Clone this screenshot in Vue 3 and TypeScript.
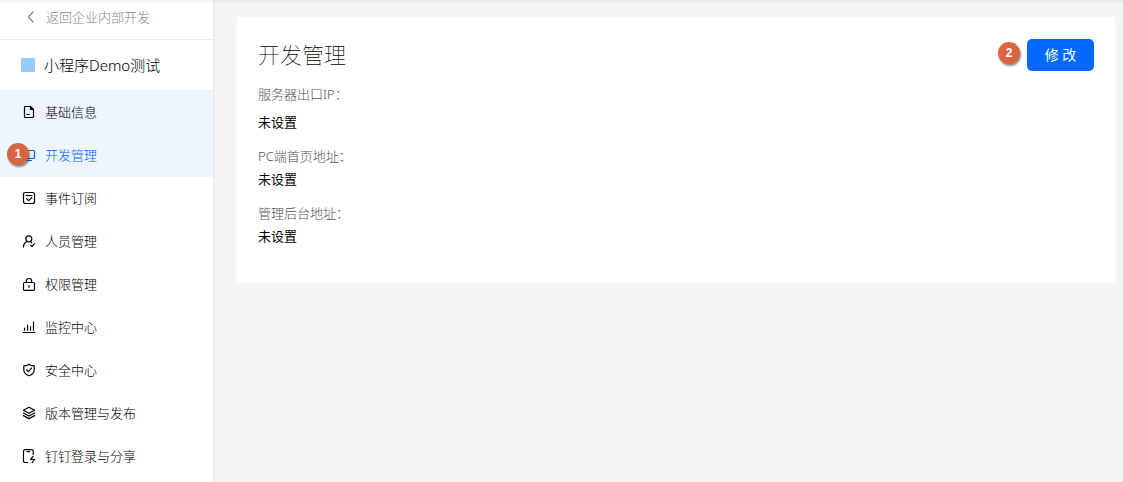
<script setup lang="ts">
interface NavItem {
  label: string
  icon: string
  highlighted?: boolean
  current?: boolean
  badge?: string
}

interface Field {
  label: string
  value: string
  roomy?: boolean
}

const navItems: NavItem[] = [
  {
    label: '基础信息',
    icon: 'M8.5 1.5H3.5Q2.5 1.5 2.5 2.5V11.5Q2.5 12.5 3.5 12.5H10.5Q11.5 12.5 11.5 11.5V4.5L8.5 1.5V4.5H11.5M4.8 9.5H7.2',
    highlighted: true,
  },
  {
    label: '开发管理',
    icon: 'M2.5 2.5H11.5Q12.5 2.5 12.5 3.5V9.5Q12.5 10.5 11.5 10.5H2.5Q1.5 10.5 1.5 9.5V3.5Q1.5 2.5 2.5 2.5ZM4.5 12.5H9.5',
    highlighted: true,
    current: true,
    badge: '1',
  },
  {
    label: '事件订阅',
    icon: 'M3.5 1.5H10.5Q12.5 1.5 12.5 3.5V10.5Q12.5 12.5 10.5 12.5H3.5Q1.5 12.5 1.5 10.5V3.5Q1.5 1.5 3.5 1.5ZM4 4.5H10M4.6 7.6L6.6 9.6L9.8 6.6',
  },
  {
    label: '人员管理',
    icon: 'M6.8 1.8A3 3 0 1 1 6.8 7.8A3 3 0 1 1 6.8 1.8ZM4.8 7.6Q1.6 9 1.4 13M8.6 7.4L9.8 9M8.6 11.2L10 12.6L12.6 9.6',
  },
  {
    label: '权限管理',
    icon: 'M2.5 5.5H11.5Q12.5 5.5 12.5 6.5V12.5Q12.5 13.3 11.5 13.3H2.5Q1.5 13.3 1.5 12.5V6.5Q1.5 5.5 2.5 5.5ZM4.3 5.4V4.2A2.7 2.7 0 0 1 9.7 4.2V5.4M7 8.5V10.3',
  },
  {
    label: '监控中心',
    icon: 'M1.2 12.5H12.8M2.5 8V10.2M5.5 5V10.2M8.5 6.5V10.2M11.5 2V10.2',
  },
  {
    label: '安全中心',
    icon: 'M7 1.2L8.7 2.3L12.2 2.9V7Q12 10.9 7 12.8Q2 10.9 1.8 7V2.9L5.3 2.3ZM4.5 6.8L6.4 8.6L9.6 5.2',
  },
  {
    label: '版本管理与发布',
    icon: 'M7 1.3L12.6 4.3L7 7.3L1.4 4.3ZM1.4 7L7 10L12.6 7M1.4 9.6L7 12.6L12.6 9.6',
  },
  {
    label: '钉钉登录与分享',
    icon: 'M5.5 13.5H3.2Q1.5 13.5 1.5 12V2Q1.5 .6 3.2 .6H9.4Q11.2 .6 11.2 2V5.4M5 2.6H7.6M11 7.4L8.6 10.4H12.6L10.2 13.5',
  },
]

const fields: Field[] = [
  { label: '服务器出口IP：', value: '未设置', roomy: true },
  { label: 'PC端首页地址：', value: '未设置' },
  { label: '管理后台地址：', value: '未设置' },
]
</script>

<template>
  <div class="layout">
    <aside class="sidebar">
      <a class="back" href="#">
        <svg class="icon" viewBox="0 0 14 14" aria-hidden="true"><path d="M9 2L4.5 7L9 12" /></svg>
        <span>返回企业内部开发</span>
      </a>
      <div class="app-name">
        <span class="app-logo"></span>
        <span>小程序Demo测试</span>
      </div>
      <nav>
        <a
          v-for="item in navItems"
          :key="item.label"
          href="#"
          class="nav-item"
          :class="{ highlighted: item.highlighted, current: item.current }"
        >
          <svg class="icon" viewBox="0 0 14 14" aria-hidden="true"><path :d="item.icon" /></svg>
          <span>{{ item.label }}</span>
          <span v-if="item.badge" class="badge nav-badge">{{ item.badge }}</span>
        </a>
      </nav>
    </aside>
    <main class="content">
      <section class="card">
        <header class="card-header">
          <h1>开发管理</h1>
          <div class="actions">
            <span class="badge">2</span>
            <button type="button">修 改</button>
          </div>
        </header>
        <dl>
          <div v-for="field in fields" :key="field.label" class="field" :class="{ roomy: field.roomy }">
            <dt>{{ field.label }}</dt>
            <dd>{{ field.value }}</dd>
          </div>
        </dl>
      </section>
    </main>
  </div>
</template>

<style>
body {
  background: #f5f5f5;
}
</style>

<style scoped>
.layout {
  position: relative;
  display: flex;
  height: 100vh;
  overflow: hidden;
  font-family: "Noto Sans", "Noto Sans CJK SC", sans-serif;
  font-size: 13px;
  font-weight: 300;
  line-height: 20px;
  color: #000;
}

.layout::before {
  content: "";
  position: absolute;
  inset: 0 0 auto;
  height: 4px;
  background: linear-gradient(rgba(0, 0, 0, 0.05), rgba(0, 0, 0, 0));
}

.sidebar {
  flex: none;
  box-sizing: border-box;
  width: 215px;
  border-right: 2px solid #ececec;
  background: #fff;
}

a {
  color: inherit;
  text-decoration: none;
}

.icon {
  flex: none;
  width: 14px;
  height: 14px;
  fill: none;
  stroke: currentColor;
  stroke-width: 1.2;
  stroke-linecap: round;
  stroke-linejoin: round;
}

.back {
  display: flex;
  align-items: center;
  gap: 8px;
  box-sizing: border-box;
  height: 40px;
  padding: 0 24px 6px;
  border-bottom: 1px solid #ececec;
  color: #85878a;
}

.app-name {
  display: flex;
  align-items: center;
  gap: 9px;
  box-sizing: border-box;
  height: 51px;
  padding-left: 21px;
  border-bottom: 1px solid #ececec;
  font-size: 15px;
}

.app-logo {
  width: 14px;
  height: 14px;
  border-radius: 1px;
  background: #96cbfa;
}

.nav-item {
  position: relative;
  display: flex;
  align-items: center;
  gap: 9px;
  box-sizing: border-box;
  height: 43px;
  padding: 0 0 1px 22px;
}

.highlighted {
  background: #eef5ff;
}

.current {
  color: #005eff;
}

.badge {
  display: flex;
  align-items: center;
  justify-content: center;
  width: 22px;
  height: 22px;
  border-radius: 50%;
  background: #d96442;
  box-shadow: 1px 2px 2px rgba(0, 0, 0, 0.45);
  color: #fff;
  font: bold 12px/22px "Liberation Sans", sans-serif;
}

.nav-badge {
  position: absolute;
  top: 9px;
  left: 7px;
}

.content {
  flex: 1;
  min-width: 0;
  padding: 17px 8px 0 22px;
  background: #f5f5f5;
}

.card {
  padding: 22px 21px 37px;
  border-radius: 2px;
  background: #fff;
}

.card-header {
  display: flex;
  align-items: flex-start;
  justify-content: space-between;
  height: 32px;
}

h1 {
  margin: 0;
  font-size: 22px;
  font-weight: 100;
  line-height: 30px;
}

.actions {
  display: flex;
  align-items: center;
  gap: 7px;
}

.actions .badge {
  margin-bottom: 4px;
}

button {
  width: 67px;
  height: 32px;
  padding: 0;
  border: 0;
  border-radius: 5px;
  background: #0069ff;
  color: #fff;
  font: 400 14px/20px "Noto Sans", "Noto Sans CJK SC", sans-serif;
}

dl {
  margin: 13px 0 0;
}

.field {
  display: grid;
  gap: 3px;
  margin-bottom: 14px;
}

.field:last-child {
  margin-bottom: 0;
}

.roomy {
  gap: 8px;
}

dt {
  color: #505254;
}

dd {
  margin: 0;
  font-weight: 400;
}
</style>
